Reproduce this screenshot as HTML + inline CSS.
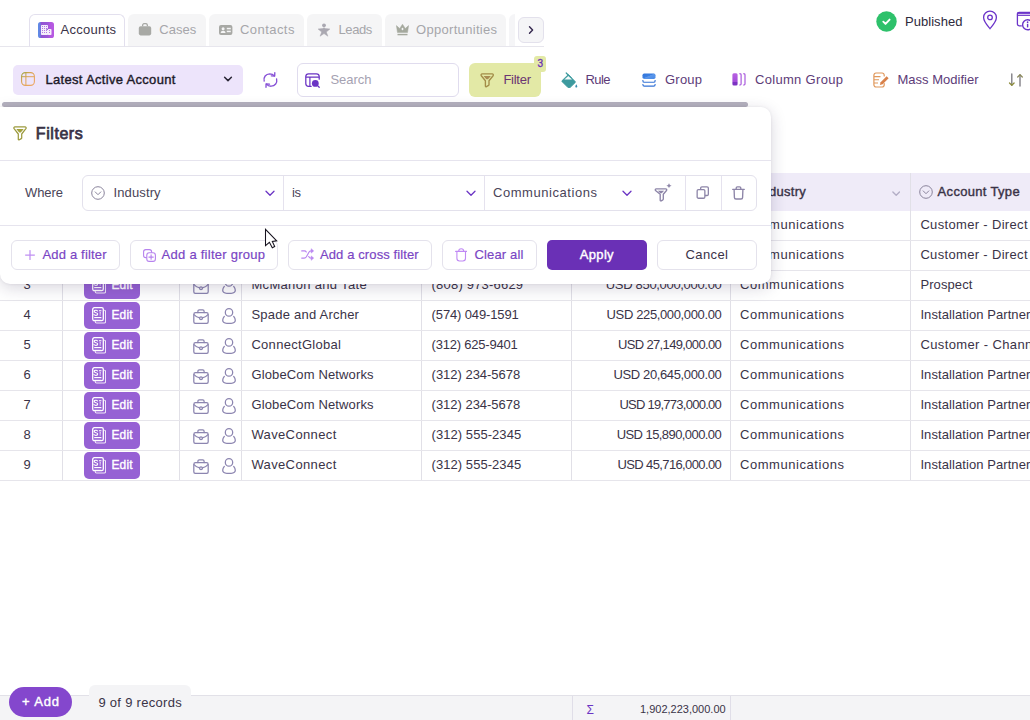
<!DOCTYPE html>
<html lang="en"><head><meta charset="utf-8"><title>Accounts</title>
<style>
html,body{margin:0;padding:0;}
body{width:1030px;height:720px;overflow:hidden;position:relative;background:#fff;font-family:"Liberation Sans",sans-serif;}
.b{position:absolute;box-sizing:border-box;display:block;}
.t{position:absolute;white-space:nowrap;line-height:20px;}
</style></head><body>
<div class="b " style="left:0px;top:46px;width:544px;height:1px;background:#e7e6ed;"></div>
<div class="b " style="left:128px;top:14px;width:78px;height:32px;background:#f5f5f6;border-radius:6px 6px 0 0;"></div>
<div class="b " style="left:209px;top:14px;width:95px;height:32px;background:#f5f5f6;border-radius:6px 6px 0 0;"></div>
<div class="b " style="left:307px;top:14px;width:75px;height:32px;background:#f5f5f6;border-radius:6px 6px 0 0;"></div>
<div class="b " style="left:385px;top:14px;width:121px;height:32px;background:#f5f5f6;border-radius:6px 6px 0 0;"></div>
<div class="b " style="left:509px;top:14px;width:6px;height:32px;background:#f5f5f7;border-radius:6px 0 0 0;"></div>
<div class="b " style="left:29px;top:14px;width:96px;height:33px;background:#fff;border:1px solid #e3e0ee;border-bottom:1px solid #e7e6ed;border-radius:6px 6px 0 0;"></div>
<svg class="b" style="left:38px;top:22px;" width="16" height="16" viewBox="0 0 16 16" fill="none"><defs><linearGradient id="ga" x1="0" y1="0" x2="1" y2="0"><stop offset="0" stop-color="#5a8ee6"/><stop offset=".13" stop-color="#6a80e2"/><stop offset=".2" stop-color="#9152d2"/><stop offset=".6" stop-color="#9a58d8"/><stop offset=".75" stop-color="#b257e0"/><stop offset="1" stop-color="#b85ae2"/></linearGradient></defs>
<rect width="16" height="16" rx="2.600" fill="url(#ga)"/>
<g fill="#fff" opacity=".9"><rect x="3" y="3" width="7" height="10" rx=".8"/><rect x="9.600" y="7" width="3.900" height="6" rx=".8"/></g>
<g fill="#b57ae2"><rect x="4" y="4" width="1" height="1"/><rect x="4" y="6" width="1" height="1"/><rect x="4" y="8" width="1" height="1"/><rect x="4" y="10" width="1" height="1"/><rect x="6" y="4" width="1" height="1"/><rect x="6" y="6" width="1" height="1"/><rect x="6" y="8" width="1" height="1"/><rect x="6" y="10" width="1" height="1"/><rect x="8" y="4" width="1" height="1"/><rect x="8" y="6" width="1" height="1"/><rect x="8" y="8" width="1" height="1"/><rect x="8" y="10" width="1" height="1"/><rect x="11" y="8" width="1" height="1"/><rect x="11" y="10" width="1" height="1"/><rect x="8.500" y="6.600" width="1.400" height="1.400" fill="#9152d2"/></g></svg>
<span class="t" style="left:60.6px;top:19.5px;font-size:13px;letter-spacing:0.28px;color:#3a3347;">Accounts</span>
<svg class="b" style="left:138.3px;top:23px;" width="14" height="13" viewBox="0 0 14 13" fill="none"><path d="M4.6 3.2V2.4C4.6 1.4 5.4.6 6.4.6h1.2c1 0 1.8.8 1.8 1.8v.8" stroke="#a8a9a5" stroke-width="1.3"/><rect x=".8" y="3.2" width="12.4" height="9.2" rx="1.8" fill="#a8a9a5"/></svg>
<span class="t" style="left:159.3px;top:19.5px;font-size:13px;letter-spacing:0.04px;color:#a6a6aa;">Cases</span>
<svg class="b" style="left:219px;top:25px;" width="14" height="10" viewBox="0 0 14 10" fill="none"><rect width="13.4" height="10" rx="2" fill="#a8a9a5"/><circle cx="4.1" cy="3.7" r="1.5" fill="#f5f5f6"/><path d="M1.7 8c0-1.5 1-2.3 2.4-2.3S6.5 6.500 6.500 8z" fill="#f5f5f6"/><rect x="7.800" y="2.800" width="4" height="1.500" fill="#f5f5f6"/><rect x="7.800" y="5.700" width="4" height="1.500" fill="#f5f5f6"/></svg>
<span class="t" style="left:240.0px;top:19.5px;font-size:13px;letter-spacing:0.44px;color:#a6a6aa;">Contacts</span>
<svg class="b" style="left:318px;top:22px;" width="12" height="15" viewBox="0 0 12 15" fill="none"><circle cx="6" cy="3.300" r="1.900" fill="#aaa8b1"/><path d="M.1 7l4.500-.4L6 5.700l1.400.9 4.500.4-3.600 3 1.600 4.200L6 11.600l-3.900 2.600L3.700 10z" fill="#aaa8b1" stroke="#aaa8b1" stroke-width=".5" stroke-linejoin="round"/></svg>
<span class="t" style="left:338.4px;top:19.5px;font-size:13px;letter-spacing:-0.36px;color:#a6a6aa;">Leads</span>
<svg class="b" style="left:395.6px;top:24px;" width="13.5" height="11.5" viewBox="0 0 13.5 11.5" fill="none"><path d="M.4 1.600l3.300 2.900L6.500.2l2.800 4.300 3.300-2.900-1.100 7H1.500z" fill="#a5a99e" stroke="#a5a99e" stroke-width=".5" stroke-linejoin="round"/><ellipse cx="6.500" cy="5" rx=".9" ry="1.300" fill="#f5f5f6"/><rect x="1.500" y="9.900" width="10" height="1.400" fill="#a5a99e"/></svg>
<span class="t" style="left:416.0px;top:19.5px;font-size:13px;letter-spacing:0.31px;color:#a6a6aa;">Opportunities</span>
<div class="b " style="left:518px;top:17px;width:26px;height:26px;background:#f5f5f7;border:1px solid #e3e1ec;border-radius:6px;"></div>
<svg class="b" style="left:526px;top:25px;" width="10" height="10" viewBox="0 0 10 10" fill="none"><path d="M3.500 1.700L6.600 5 3.500 8.300" stroke="#35284f" stroke-width="1.400" stroke-linecap="round" stroke-linejoin="round"/></svg>
<svg class="b" style="left:876px;top:11px;" width="21" height="21" viewBox="0 0 21 21" fill="none"><circle cx="10.500" cy="10.500" r="10.200" fill="#2ec16b"/><path d="M7.300 10.700l2.200 2.200 4.100-4.300" stroke="#fff" stroke-width="1.900" stroke-linecap="round" stroke-linejoin="round"/></svg>
<span class="t" style="left:905.0px;top:11.5px;font-size:13px;letter-spacing:0.04px;color:#2e2a3b;">Published</span>
<svg class="b" style="left:982px;top:9.7px;" width="16" height="20" viewBox="0 0 16 20" fill="none"><path d="M8 1.200c3.600 0 6.400 2.700 6.400 6.200 0 4-4.300 8.600-6.400 11.200C5.900 16 1.600 11.400 1.600 7.400 1.600 3.900 4.400 1.200 8 1.200z" stroke="#6b34c9" stroke-width="1.300"/><circle cx="8" cy="7.400" r="2.300" stroke="#6b34c9" stroke-width="1.300"/></svg>
<svg class="b" style="left:1016px;top:10.5px;" width="16" height="21" viewBox="0 0 16 21" fill="none"><path d="M14 1.300H3.200c-1 0-1.800.8-1.800 1.800V13c0 1 .8 1.800 1.800 1.800h2.600" stroke="#6b34c9" stroke-width="1.300"/><path d="M1.400 4.300H14" stroke="#6b34c9" stroke-width="1.200"/><path d="M1.400 2.200H14" stroke="#6b34c9" stroke-width="1.400"/><circle cx="11.600" cy="13.800" r="5" fill="#fff" stroke="#6b34c9" stroke-width="1.400"/><rect x="10.900" y="12.800" width="1.400" height="3.600" fill="#6b34c9"/><circle cx="11.600" cy="11.200" r=".85" fill="#6b34c9"/></svg>
<div class="b " style="left:13px;top:65px;width:230px;height:30px;background:#ede4fb;border-radius:5px;"></div>
<svg class="b" style="left:21px;top:72px;" width="14" height="14" viewBox="0 0 14 14" fill="none"><defs><linearGradient id="gv" x1="0" y1="0" x2="1" y2="1"><stop offset="0" stop-color="#9aa640"/><stop offset=".35" stop-color="#d9a452"/><stop offset="1" stop-color="#f0a868"/></linearGradient></defs><rect x=".6" y=".6" width="12.800" height="12.800" rx="3.800" stroke="url(#gv)" stroke-width="1.100"/><path d="M.6 4.700h12.800M4.900.8v12.600" stroke="url(#gv)" stroke-width="1"/></svg>
<span class="t" style="left:45.4px;top:69.5px;font-size:13px;letter-spacing:0.32px;color:#1d1a29;-webkit-text-stroke:0.40px #1d1a29;">Latest Active Account</span>
<svg class="b" style="left:223px;top:75px;" width="10" height="8" viewBox="0 0 10 8" fill="none"><path d="M1.600 2.200L5 5.600l3.400-3.400" stroke="#2a2636" stroke-width="1.500" stroke-linecap="round" stroke-linejoin="round"/></svg>
<svg class="b" style="left:262px;top:71px;" width="17" height="18" viewBox="0 0 17 18" fill="none"><g stroke="#8650d6" stroke-width="1.350" stroke-linecap="round" stroke-linejoin="round"><path d="M2.200 10C1.300 6.200 3.800 2.900 7.700 2.800c2 0 3.600.8 4.700 2.100"/><path d="M12.800 1.700l-.1 3.400-3.400-.2"/><path d="M14.600 8c.9 3.800-1.600 7.100-5.500 7.200-2 0-3.600-.8-4.700-2.100"/><path d="M4 16.300l.1-3.400 3.400.2"/></g></svg>
<div class="b " style="left:297px;top:63px;width:162px;height:34px;background:#fff;border:1px solid #e0dcee;border-radius:6px;"></div>
<svg class="b" style="left:305px;top:73px;" width="16" height="15" viewBox="0 0 16 15" fill="none"><path d="M6.200 13.300H3.600C2 13.300.800 12.100.800 10.500V3.600C.800 2 2 .8 3.600.8h7.800C13 .8 14.200 2 14.200 3.600v2.600" stroke="#6b34c4" stroke-width="1.250" stroke-linecap="round"/><path d="M.800 4.200H14.200M4.900 4.200v9" stroke="#6b34c4" stroke-width="1.200"/><circle cx="10.300" cy="10.400" r="3.400" fill="#6b34c4"/><path d="M12.800 12.900l1.400 1.400" stroke="#6b34c4" stroke-width="1.300" stroke-linecap="round"/></svg>
<span class="t" style="left:330.4px;top:69.5px;font-size:13px;letter-spacing:0.00px;color:#a5a2b2;">Search</span>
<div class="b " style="left:469px;top:63px;width:72px;height:34px;background:#e3e9a6;border-radius:6px;"></div>
<div class="b " style="left:534px;top:56px;width:12px;height:16px;background:#e3e9a6;border-radius:3px;"></div>
<span class="t" style="left:537.6px;top:53.5px;font-size:10px;letter-spacing:0.00px;color:#6930b8;-webkit-text-stroke:0.31px #6930b8;">3</span>
<svg class="b" style="left:480px;top:73px;" width="15" height="14.5" viewBox="0 0 15 14.5" fill="none"><path d="M2.200.9h10c1 0 1.500 1 .9 1.800L9 7.700v4c0 .3-.2.600-.4.700l-2.200 1.200c-.5.300-1-.1-1-.6V7.700L1.300 2.700C.7 1.900 1.200.9 2.200.9z" stroke="#a38d48" stroke-width="1.350" stroke-linejoin="round"/><path d="M3.500 2.900h7.400L8 6.300H6.400z" fill="#a98c52"/></svg>
<span class="t" style="left:503.4px;top:69.5px;font-size:13px;letter-spacing:-0.26px;color:#6b3572;">Filter</span>
<svg class="b" style="left:561px;top:71.5px;" width="16.5" height="16.5" viewBox="0 0 16.5 16.5" fill="none"><path d="M5.200 1l5 5" stroke="#3d9a9e" stroke-width="1.200" stroke-linecap="round"/><path d="M7.300 2.600l6.900 6.900c.3.300.3.800 0 1.100l-5.100 5c-.6.600-1.500.6-2.100 0L1.100 9.700c-.3-.3-.3-.8 0-1.100z" fill="#3d9a9e" stroke="#3d9a9e" stroke-width=".8" stroke-linejoin="round"/><path d="M7.300 3.900l3.700 3.700H3.400z" fill="#f4fbfb"/><path d="M15.300 12.300c.6.900 1 1.500 1 2.100s-.4 1-1 1-1-.4-1-1 .4-1.200 1-2.100z" fill="#3b8fb0"/></svg>
<span class="t" style="left:585.6px;top:69.5px;font-size:13px;letter-spacing:-0.65px;color:#5d3b78;">Rule</span>
<svg class="b" style="left:642px;top:72.5px;" width="14" height="14" viewBox="0 0 14 14" fill="none"><defs><linearGradient id="gg" x1="0" y1="0" x2="1" y2="1"><stop offset="0" stop-color="#2f74dc"/><stop offset=".45" stop-color="#3c7fe0"/><stop offset=".5" stop-color="#5b97ea"/><stop offset="1" stop-color="#4a8ae6"/></linearGradient></defs><rect x=".5" y=".5" width="13" height="5.400" rx="1.700" fill="url(#gg)"/><path d="M.9 7v.9c0 .8.600 1.300 1.400 1.300h9.400c.8 0 1.400-.5 1.400-1.300V7" stroke="#3473d6" stroke-width="1.100"/><path d="M.9 10.900v.9c0 .8.600 1.300 1.400 1.300h9.400c.8 0 1.400-.5 1.400-1.300v-.9" stroke="#3473d6" stroke-width="1.100"/></svg>
<span class="t" style="left:665.0px;top:69.5px;font-size:13px;letter-spacing:0.22px;color:#5d3b78;">Group</span>
<svg class="b" style="left:732px;top:73px;" width="14" height="13" viewBox="0 0 14 13" fill="none"><defs><linearGradient id="gc" x1="0" y1="0" x2="0" y2="1"><stop offset="0" stop-color="#b862e2"/><stop offset=".7" stop-color="#a44cda"/><stop offset=".72" stop-color="#7c32c2"/><stop offset="1" stop-color="#7c32c2"/></linearGradient></defs><rect x=".4" y=".3" width="5.200" height="12.200" rx="1.500" fill="url(#gc)"/><path d="M7.300.8h.9c.5 0 .9.400.9.900v9.400c0 .5-.4.900-.9.900h-.9" stroke="#a24cda" stroke-width="1.100"/><path d="M11.200.8h.9c.5 0 .9.400.9.900v9.400c0 .5-.4.900-.9.900h-.9" stroke="#a24cda" stroke-width="1.100"/></svg>
<span class="t" style="left:755.0px;top:69.5px;font-size:13px;letter-spacing:0.31px;color:#5d3b78;">Column Group</span>
<svg class="b" style="left:873px;top:72px;" width="17" height="16" viewBox="0 0 17 16" fill="none"><path d="M11.200 4V3.200c0-1.200-.9-2.200-2.100-2.200H3c-1.200 0-2.100 1-2.100 2.200v9.600C.9 14 1.800 15 3 15h6.100c1.200 0 2.100-1 2.100-2.200V11.500" stroke="#e0975a" stroke-width="1.200" stroke-linecap="round"/><path d="M1 4.600h6.500M1 7.800h5M1 11h4" stroke="#e0975a" stroke-width="1.100"/><path d="M13.600 4.200l2 2-6 6-2.700.7.700-2.700z" fill="#d8814a"/></svg>
<span class="t" style="left:897.4px;top:69.5px;font-size:13px;letter-spacing:0.02px;color:#5d3b78;">Mass Modifier</span>
<svg class="b" style="left:1008px;top:73px;" width="17" height="14" viewBox="0 0 17 14" fill="none"><path d="M3.800 1v11.200" stroke="#77757c" stroke-width="1.300" stroke-linecap="round"/><path d="M1.500 10l2.300 2.300L6.100 10" stroke="#8c8c3c" stroke-width="1.300" stroke-linecap="round" stroke-linejoin="round"/><path d="M12 13V1.800" stroke="#77757c" stroke-width="1.300" stroke-linecap="round"/><path d="M9.700 4l2.300-2.300L14.300 4" stroke="#8c8a5c" stroke-width="1.300" stroke-linecap="round" stroke-linejoin="round"/></svg>
<div class="b " style="left:2px;top:102px;width:746px;height:5px;background:#b4b1be;border-radius:3px;"></div>
<div class="b " style="left:0px;top:173px;width:1030px;height:37.5px;background:#efebf8;"></div>
<div class="b " style="left:62px;top:173px;width:1px;height:307px;background:#e1e0e7;"></div>
<div class="b " style="left:179px;top:173px;width:1px;height:307px;background:#e1e0e7;"></div>
<div class="b " style="left:241px;top:173px;width:1px;height:307px;background:#e1e0e7;"></div>
<div class="b " style="left:421px;top:173px;width:1px;height:307px;background:#e1e0e7;"></div>
<div class="b " style="left:571px;top:173px;width:1px;height:307px;background:#e1e0e7;"></div>
<div class="b " style="left:730px;top:173px;width:1px;height:307px;background:#e1e0e7;"></div>
<div class="b " style="left:910px;top:173px;width:1px;height:307px;background:#e1e0e7;"></div>
<svg class="b" style="left:739px;top:185px;" width="14" height="14" viewBox="0 0 14 14" fill="none"><circle cx="7" cy="7" r="6.300" stroke="#8a849c" stroke-width="1"/><path d="M4.200 5.900L7 8.700l2.800-2.800" stroke="#8a849c" stroke-width="1" stroke-linecap="round" stroke-linejoin="round"/></svg>
<span class="t" style="left:757.6px;top:181.9px;font-size:13px;letter-spacing:0.27px;color:#3a3347;-webkit-text-stroke:0.40px #3a3347;">Industry</span>
<svg class="b" style="left:892px;top:190.6px;" width="8.4" height="6" viewBox="0 0 8.4 6" fill="none"><path d="M.9 1l3.300 3.200L7.500 1" stroke="#b3aec6" stroke-width="1.400" stroke-linecap="round" stroke-linejoin="round"/></svg>
<svg class="b" style="left:919px;top:185px;" width="14" height="14" viewBox="0 0 14 14" fill="none"><circle cx="7" cy="7" r="6.300" stroke="#8a849c" stroke-width="1"/><path d="M4.200 5.900L7 8.700l2.800-2.800" stroke="#8a849c" stroke-width="1" stroke-linecap="round" stroke-linejoin="round"/></svg>
<span class="t" style="left:937.6px;top:181.9px;font-size:13px;letter-spacing:0.32px;color:#3a3347;-webkit-text-stroke:0.40px #3a3347;">Account Type</span>
<div class="b " style="left:0px;top:240px;width:1030px;height:1px;background:#e6e5eb;"></div>
<span class="t" style="left:740.0px;top:214.5px;font-size:13px;letter-spacing:0.55px;color:#3a3347;">Communications</span>
<span class="t" style="left:920.4px;top:214.5px;font-size:13px;letter-spacing:0.33px;color:#3a3347;">Customer - Direct</span>
<div class="b " style="left:0px;top:270px;width:1030px;height:1px;background:#e6e5eb;"></div>
<span class="t" style="left:740.0px;top:244.5px;font-size:13px;letter-spacing:0.55px;color:#3a3347;">Communications</span>
<span class="t" style="left:920.4px;top:244.5px;font-size:13px;letter-spacing:0.33px;color:#3a3347;">Customer - Direct</span>
<div class="b " style="left:0px;top:300px;width:1030px;height:1px;background:#e6e5eb;"></div>
<span class="t" style="left:23.6px;top:274.5px;font-size:13px;letter-spacing:0.00px;color:#3a3347;">3</span>
<div class="b " style="left:84px;top:272px;width:56px;height:27px;background:#9661d4;border-radius:5px;"></div>
<svg class="b" style="left:92px;top:277px;" width="14" height="17" viewBox="0 0 14 17" fill="none"><g stroke="#fff" stroke-linejoin="round"><path d="M3.200 13.600v1c0 .8.600 1.400 1.400 1.400h7.600c.8 0 1.400-.6 1.400-1.400V4.600c0-.8-.6-1.400-1.400-1.400" stroke-width="1.100" opacity=".85"/><rect x=".7" y=".7" width="10.600" height="13" rx="1.600" stroke-width="1.300"/></g><path d="M5.600 4c-.4-.5-1-.8-1.700-.8-1 0-1.700.5-1.700 1.300 0 1.700 3.500.8 3.500 2.600 0 .8-.7 1.300-1.800 1.300-.8 0-1.500-.3-1.900-.9" stroke="#fff" stroke-width="1.150" stroke-linecap="round" fill="none"/><g fill="#fff"><rect x="7" y="3.200" width="2.400" height="1.100"/><rect x="7.500" y="5.400" width="1.500" height="1.100"/><rect x="7.500" y="7.400" width="1.500" height="1.100" opacity=".65"/><rect x="2.200" y="10" width="7.200" height="1"/><rect x="2.200" y="11.700" width="7.200" height=".7" opacity=".6"/></g></svg>
<span class="t" style="left:111.4px;top:274.6px;font-size:12px;letter-spacing:0.21px;color:#fff;-webkit-text-stroke:0.37px #fff;">Edit</span>
<svg class="b" style="left:193px;top:278.7px;" width="16" height="15.2" viewBox="0 0 16 15.200" fill="none"><g stroke="#8c85b0" stroke-width="1.250" stroke-linejoin="round" stroke-linecap="round"><rect x=".8" y="3.700" width="14.400" height="10.700" rx="1.700"/><path d="M4.900 3.600V2.300c0-.8.600-1.400 1.400-1.400h3.400c.8 0 1.400.6 1.400 1.400v1.300"/><path d="M1 5.600c1.500 1.700 3.500 2.800 5.600 3.200M15 5.600c-1.500 1.700-3.500 2.800-5.600 3.200"/><circle cx="8" cy="9.200" r="1.400"/></g></svg>
<svg class="b" style="left:221.7px;top:277.8px;" width="14" height="16.2" viewBox="0 0 14 16.200" fill="none"><g stroke="#8c85b0" stroke-width="1.250" stroke-linecap="round"><circle cx="7" cy="4.400" r="3.700"/><path d="M2.300 8.400C1.300 9.600.7 10.900.7 12.200c0 2 2.800 3.300 6.300 3.300s6.300-1.300 6.300-3.300c0-1.300-.6-2.600-1.600-3.800"/></g></svg>
<span class="t" style="left:251.4px;top:274.5px;font-size:13px;letter-spacing:0.33px;color:#3a3347;">McMahon and Tate</span>
<span class="t" style="left:431.6px;top:274.5px;font-size:13px;letter-spacing:0.20px;color:#3a3347;">(808) 973-6629</span>
<span class="t" style="left:605.8px;top:274.5px;font-size:13px;letter-spacing:-0.32px;color:#3a3347;">USD 850,000,000.00</span>
<span class="t" style="left:740.0px;top:274.5px;font-size:13px;letter-spacing:0.55px;color:#3a3347;">Communications</span>
<span class="t" style="left:920.4px;top:274.5px;font-size:13px;letter-spacing:0.10px;color:#3a3347;">Prospect</span>
<div class="b " style="left:0px;top:330px;width:1030px;height:1px;background:#e6e5eb;"></div>
<span class="t" style="left:23.6px;top:304.5px;font-size:13px;letter-spacing:0.00px;color:#3a3347;">4</span>
<div class="b " style="left:84px;top:302px;width:56px;height:27px;background:#9661d4;border-radius:5px;"></div>
<svg class="b" style="left:92px;top:307px;" width="14" height="17" viewBox="0 0 14 17" fill="none"><g stroke="#fff" stroke-linejoin="round"><path d="M3.200 13.600v1c0 .8.600 1.400 1.400 1.400h7.600c.8 0 1.400-.6 1.400-1.400V4.600c0-.8-.6-1.400-1.400-1.400" stroke-width="1.100" opacity=".85"/><rect x=".7" y=".7" width="10.600" height="13" rx="1.600" stroke-width="1.300"/></g><path d="M5.600 4c-.4-.5-1-.8-1.700-.8-1 0-1.700.5-1.700 1.300 0 1.700 3.500.8 3.500 2.600 0 .8-.7 1.300-1.800 1.300-.8 0-1.500-.3-1.900-.9" stroke="#fff" stroke-width="1.150" stroke-linecap="round" fill="none"/><g fill="#fff"><rect x="7" y="3.200" width="2.400" height="1.100"/><rect x="7.500" y="5.400" width="1.500" height="1.100"/><rect x="7.500" y="7.400" width="1.500" height="1.100" opacity=".65"/><rect x="2.200" y="10" width="7.200" height="1"/><rect x="2.200" y="11.700" width="7.200" height=".7" opacity=".6"/></g></svg>
<span class="t" style="left:111.4px;top:304.6px;font-size:12px;letter-spacing:0.21px;color:#fff;-webkit-text-stroke:0.37px #fff;">Edit</span>
<svg class="b" style="left:193px;top:308.7px;" width="16" height="15.2" viewBox="0 0 16 15.200" fill="none"><g stroke="#8c85b0" stroke-width="1.250" stroke-linejoin="round" stroke-linecap="round"><rect x=".8" y="3.700" width="14.400" height="10.700" rx="1.700"/><path d="M4.900 3.600V2.300c0-.8.600-1.400 1.400-1.400h3.400c.8 0 1.400.6 1.400 1.400v1.300"/><path d="M1 5.600c1.500 1.700 3.500 2.800 5.600 3.200M15 5.600c-1.500 1.700-3.500 2.800-5.600 3.200"/><circle cx="8" cy="9.200" r="1.400"/></g></svg>
<svg class="b" style="left:221.7px;top:307.8px;" width="14" height="16.2" viewBox="0 0 14 16.200" fill="none"><g stroke="#8c85b0" stroke-width="1.250" stroke-linecap="round"><circle cx="7" cy="4.400" r="3.700"/><path d="M2.300 8.400C1.300 9.600.7 10.900.7 12.200c0 2 2.800 3.300 6.300 3.300s6.300-1.300 6.300-3.300c0-1.300-.6-2.600-1.600-3.800"/></g></svg>
<span class="t" style="left:251.4px;top:304.5px;font-size:13px;letter-spacing:0.23px;color:#3a3347;">Spade and Archer</span>
<span class="t" style="left:431.6px;top:304.5px;font-size:13px;letter-spacing:-0.13px;color:#3a3347;">(574) 049-1591</span>
<span class="t" style="left:606.6px;top:304.5px;font-size:13px;letter-spacing:-0.37px;color:#3a3347;">USD 225,000,000.00</span>
<span class="t" style="left:740.0px;top:304.5px;font-size:13px;letter-spacing:0.55px;color:#3a3347;">Communications</span>
<span class="t" style="left:920.4px;top:304.5px;font-size:13px;letter-spacing:0.08px;color:#3a3347;">Installation Partner</span>
<div class="b " style="left:0px;top:360px;width:1030px;height:1px;background:#e6e5eb;"></div>
<span class="t" style="left:23.6px;top:334.5px;font-size:13px;letter-spacing:0.00px;color:#3a3347;">5</span>
<div class="b " style="left:84px;top:332px;width:56px;height:27px;background:#9661d4;border-radius:5px;"></div>
<svg class="b" style="left:92px;top:337px;" width="14" height="17" viewBox="0 0 14 17" fill="none"><g stroke="#fff" stroke-linejoin="round"><path d="M3.200 13.600v1c0 .8.600 1.400 1.400 1.400h7.600c.8 0 1.400-.6 1.400-1.400V4.600c0-.8-.6-1.400-1.400-1.400" stroke-width="1.100" opacity=".85"/><rect x=".7" y=".7" width="10.600" height="13" rx="1.600" stroke-width="1.300"/></g><path d="M5.600 4c-.4-.5-1-.8-1.700-.8-1 0-1.700.5-1.700 1.300 0 1.700 3.500.8 3.500 2.600 0 .8-.7 1.300-1.800 1.300-.8 0-1.500-.3-1.900-.9" stroke="#fff" stroke-width="1.150" stroke-linecap="round" fill="none"/><g fill="#fff"><rect x="7" y="3.200" width="2.400" height="1.100"/><rect x="7.500" y="5.400" width="1.500" height="1.100"/><rect x="7.500" y="7.400" width="1.500" height="1.100" opacity=".65"/><rect x="2.200" y="10" width="7.200" height="1"/><rect x="2.200" y="11.700" width="7.200" height=".7" opacity=".6"/></g></svg>
<span class="t" style="left:111.4px;top:334.6px;font-size:12px;letter-spacing:0.21px;color:#fff;-webkit-text-stroke:0.37px #fff;">Edit</span>
<svg class="b" style="left:193px;top:338.7px;" width="16" height="15.2" viewBox="0 0 16 15.200" fill="none"><g stroke="#8c85b0" stroke-width="1.250" stroke-linejoin="round" stroke-linecap="round"><rect x=".8" y="3.700" width="14.400" height="10.700" rx="1.700"/><path d="M4.900 3.600V2.300c0-.8.600-1.400 1.400-1.400h3.400c.8 0 1.400.6 1.400 1.400v1.300"/><path d="M1 5.600c1.500 1.700 3.500 2.800 5.600 3.200M15 5.600c-1.500 1.700-3.500 2.800-5.600 3.200"/><circle cx="8" cy="9.200" r="1.400"/></g></svg>
<svg class="b" style="left:221.7px;top:337.8px;" width="14" height="16.2" viewBox="0 0 14 16.200" fill="none"><g stroke="#8c85b0" stroke-width="1.250" stroke-linecap="round"><circle cx="7" cy="4.400" r="3.700"/><path d="M2.300 8.400C1.300 9.600.7 10.900.7 12.200c0 2 2.800 3.300 6.300 3.300s6.300-1.300 6.300-3.300c0-1.300-.6-2.600-1.600-3.800"/></g></svg>
<span class="t" style="left:251.4px;top:334.5px;font-size:13px;letter-spacing:0.30px;color:#3a3347;">ConnectGlobal</span>
<span class="t" style="left:431.6px;top:334.5px;font-size:13px;letter-spacing:-0.21px;color:#3a3347;">(312) 625-9401</span>
<span class="t" style="left:618.0px;top:334.5px;font-size:13px;letter-spacing:-0.65px;color:#3a3347;">USD 27,149,000.00</span>
<span class="t" style="left:740.0px;top:334.5px;font-size:13px;letter-spacing:0.55px;color:#3a3347;">Communications</span>
<span class="t" style="left:920.4px;top:334.5px;font-size:13px;letter-spacing:0.38px;color:#3a3347;">Customer - Channel</span>
<div class="b " style="left:0px;top:390px;width:1030px;height:1px;background:#e6e5eb;"></div>
<span class="t" style="left:23.6px;top:364.5px;font-size:13px;letter-spacing:0.00px;color:#3a3347;">6</span>
<div class="b " style="left:84px;top:362px;width:56px;height:27px;background:#9661d4;border-radius:5px;"></div>
<svg class="b" style="left:92px;top:367px;" width="14" height="17" viewBox="0 0 14 17" fill="none"><g stroke="#fff" stroke-linejoin="round"><path d="M3.200 13.600v1c0 .8.600 1.400 1.400 1.400h7.600c.8 0 1.400-.6 1.400-1.400V4.600c0-.8-.6-1.400-1.400-1.400" stroke-width="1.100" opacity=".85"/><rect x=".7" y=".7" width="10.600" height="13" rx="1.600" stroke-width="1.300"/></g><path d="M5.600 4c-.4-.5-1-.8-1.700-.8-1 0-1.700.5-1.700 1.300 0 1.700 3.500.8 3.500 2.600 0 .8-.7 1.300-1.800 1.300-.8 0-1.500-.3-1.900-.9" stroke="#fff" stroke-width="1.150" stroke-linecap="round" fill="none"/><g fill="#fff"><rect x="7" y="3.200" width="2.400" height="1.100"/><rect x="7.500" y="5.400" width="1.500" height="1.100"/><rect x="7.500" y="7.400" width="1.500" height="1.100" opacity=".65"/><rect x="2.200" y="10" width="7.200" height="1"/><rect x="2.200" y="11.700" width="7.200" height=".7" opacity=".6"/></g></svg>
<span class="t" style="left:111.4px;top:364.6px;font-size:12px;letter-spacing:0.21px;color:#fff;-webkit-text-stroke:0.37px #fff;">Edit</span>
<svg class="b" style="left:193px;top:368.7px;" width="16" height="15.2" viewBox="0 0 16 15.200" fill="none"><g stroke="#8c85b0" stroke-width="1.250" stroke-linejoin="round" stroke-linecap="round"><rect x=".8" y="3.700" width="14.400" height="10.700" rx="1.700"/><path d="M4.900 3.600V2.300c0-.8.600-1.400 1.400-1.400h3.400c.8 0 1.400.6 1.400 1.400v1.300"/><path d="M1 5.600c1.500 1.700 3.500 2.800 5.600 3.200M15 5.600c-1.500 1.700-3.500 2.800-5.600 3.200"/><circle cx="8" cy="9.200" r="1.400"/></g></svg>
<svg class="b" style="left:221.7px;top:367.8px;" width="14" height="16.2" viewBox="0 0 14 16.200" fill="none"><g stroke="#8c85b0" stroke-width="1.250" stroke-linecap="round"><circle cx="7" cy="4.400" r="3.700"/><path d="M2.300 8.400C1.300 9.600.7 10.900.7 12.200c0 2 2.800 3.300 6.300 3.300s6.300-1.300 6.300-3.300c0-1.300-.6-2.600-1.600-3.800"/></g></svg>
<span class="t" style="left:251.4px;top:364.5px;font-size:13px;letter-spacing:0.14px;color:#3a3347;">GlobeCom Networks</span>
<span class="t" style="left:431.6px;top:364.5px;font-size:13px;letter-spacing:-0.02px;color:#3a3347;">(312) 234-5678</span>
<span class="t" style="left:613.4px;top:364.5px;font-size:13px;letter-spacing:-0.36px;color:#3a3347;">USD 20,645,000.00</span>
<span class="t" style="left:740.0px;top:364.5px;font-size:13px;letter-spacing:0.55px;color:#3a3347;">Communications</span>
<span class="t" style="left:920.4px;top:364.5px;font-size:13px;letter-spacing:0.08px;color:#3a3347;">Installation Partner</span>
<div class="b " style="left:0px;top:420px;width:1030px;height:1px;background:#e6e5eb;"></div>
<span class="t" style="left:23.6px;top:394.5px;font-size:13px;letter-spacing:0.00px;color:#3a3347;">7</span>
<div class="b " style="left:84px;top:392px;width:56px;height:27px;background:#9661d4;border-radius:5px;"></div>
<svg class="b" style="left:92px;top:397px;" width="14" height="17" viewBox="0 0 14 17" fill="none"><g stroke="#fff" stroke-linejoin="round"><path d="M3.200 13.600v1c0 .8.600 1.400 1.400 1.400h7.600c.8 0 1.400-.6 1.400-1.400V4.600c0-.8-.6-1.400-1.400-1.400" stroke-width="1.100" opacity=".85"/><rect x=".7" y=".7" width="10.600" height="13" rx="1.600" stroke-width="1.300"/></g><path d="M5.600 4c-.4-.5-1-.8-1.700-.8-1 0-1.700.5-1.700 1.300 0 1.700 3.500.8 3.500 2.600 0 .8-.7 1.300-1.800 1.300-.8 0-1.500-.3-1.900-.9" stroke="#fff" stroke-width="1.150" stroke-linecap="round" fill="none"/><g fill="#fff"><rect x="7" y="3.200" width="2.400" height="1.100"/><rect x="7.500" y="5.400" width="1.500" height="1.100"/><rect x="7.500" y="7.400" width="1.500" height="1.100" opacity=".65"/><rect x="2.200" y="10" width="7.200" height="1"/><rect x="2.200" y="11.700" width="7.200" height=".7" opacity=".6"/></g></svg>
<span class="t" style="left:111.4px;top:394.6px;font-size:12px;letter-spacing:0.21px;color:#fff;-webkit-text-stroke:0.37px #fff;">Edit</span>
<svg class="b" style="left:193px;top:398.7px;" width="16" height="15.2" viewBox="0 0 16 15.200" fill="none"><g stroke="#8c85b0" stroke-width="1.250" stroke-linejoin="round" stroke-linecap="round"><rect x=".8" y="3.700" width="14.400" height="10.700" rx="1.700"/><path d="M4.900 3.600V2.300c0-.8.600-1.400 1.400-1.400h3.400c.8 0 1.400.6 1.400 1.400v1.300"/><path d="M1 5.600c1.500 1.700 3.500 2.800 5.600 3.200M15 5.600c-1.500 1.700-3.500 2.800-5.600 3.200"/><circle cx="8" cy="9.200" r="1.400"/></g></svg>
<svg class="b" style="left:221.7px;top:397.8px;" width="14" height="16.2" viewBox="0 0 14 16.200" fill="none"><g stroke="#8c85b0" stroke-width="1.250" stroke-linecap="round"><circle cx="7" cy="4.400" r="3.700"/><path d="M2.300 8.400C1.300 9.600.7 10.900.7 12.200c0 2 2.800 3.300 6.300 3.300s6.300-1.300 6.300-3.300c0-1.300-.6-2.600-1.600-3.800"/></g></svg>
<span class="t" style="left:251.4px;top:394.5px;font-size:13px;letter-spacing:0.14px;color:#3a3347;">GlobeCom Networks</span>
<span class="t" style="left:431.6px;top:394.5px;font-size:13px;letter-spacing:-0.02px;color:#3a3347;">(312) 234-5678</span>
<span class="t" style="left:619.4px;top:394.5px;font-size:13px;letter-spacing:-0.74px;color:#3a3347;">USD 19,773,000.00</span>
<span class="t" style="left:740.0px;top:394.5px;font-size:13px;letter-spacing:0.55px;color:#3a3347;">Communications</span>
<span class="t" style="left:920.4px;top:394.5px;font-size:13px;letter-spacing:0.08px;color:#3a3347;">Installation Partner</span>
<div class="b " style="left:0px;top:450px;width:1030px;height:1px;background:#e6e5eb;"></div>
<span class="t" style="left:23.6px;top:424.5px;font-size:13px;letter-spacing:0.00px;color:#3a3347;">8</span>
<div class="b " style="left:84px;top:422px;width:56px;height:27px;background:#9661d4;border-radius:5px;"></div>
<svg class="b" style="left:92px;top:427px;" width="14" height="17" viewBox="0 0 14 17" fill="none"><g stroke="#fff" stroke-linejoin="round"><path d="M3.200 13.600v1c0 .8.600 1.400 1.400 1.400h7.600c.8 0 1.400-.6 1.400-1.400V4.600c0-.8-.6-1.400-1.400-1.400" stroke-width="1.100" opacity=".85"/><rect x=".7" y=".7" width="10.600" height="13" rx="1.600" stroke-width="1.300"/></g><path d="M5.600 4c-.4-.5-1-.8-1.700-.8-1 0-1.700.5-1.700 1.300 0 1.700 3.500.8 3.500 2.600 0 .8-.7 1.300-1.800 1.300-.8 0-1.500-.3-1.900-.9" stroke="#fff" stroke-width="1.150" stroke-linecap="round" fill="none"/><g fill="#fff"><rect x="7" y="3.200" width="2.400" height="1.100"/><rect x="7.500" y="5.400" width="1.500" height="1.100"/><rect x="7.500" y="7.400" width="1.500" height="1.100" opacity=".65"/><rect x="2.200" y="10" width="7.200" height="1"/><rect x="2.200" y="11.700" width="7.200" height=".7" opacity=".6"/></g></svg>
<span class="t" style="left:111.4px;top:424.6px;font-size:12px;letter-spacing:0.21px;color:#fff;-webkit-text-stroke:0.37px #fff;">Edit</span>
<svg class="b" style="left:193px;top:428.7px;" width="16" height="15.2" viewBox="0 0 16 15.200" fill="none"><g stroke="#8c85b0" stroke-width="1.250" stroke-linejoin="round" stroke-linecap="round"><rect x=".8" y="3.700" width="14.400" height="10.700" rx="1.700"/><path d="M4.900 3.600V2.300c0-.8.600-1.400 1.400-1.400h3.400c.8 0 1.400.6 1.400 1.400v1.300"/><path d="M1 5.600c1.500 1.700 3.500 2.800 5.600 3.200M15 5.600c-1.500 1.700-3.500 2.800-5.600 3.200"/><circle cx="8" cy="9.200" r="1.400"/></g></svg>
<svg class="b" style="left:221.7px;top:427.8px;" width="14" height="16.2" viewBox="0 0 14 16.200" fill="none"><g stroke="#8c85b0" stroke-width="1.250" stroke-linecap="round"><circle cx="7" cy="4.400" r="3.700"/><path d="M2.300 8.400C1.300 9.600.7 10.900.7 12.200c0 2 2.800 3.300 6.300 3.300s6.300-1.300 6.300-3.300c0-1.300-.6-2.600-1.600-3.800"/></g></svg>
<span class="t" style="left:251.4px;top:424.5px;font-size:13px;letter-spacing:0.37px;color:#3a3347;">WaveConnect</span>
<span class="t" style="left:431.6px;top:424.5px;font-size:13px;letter-spacing:0.05px;color:#3a3347;">(312) 555-2345</span>
<span class="t" style="left:616.7px;top:424.5px;font-size:13px;letter-spacing:-0.57px;color:#3a3347;">USD 15,890,000.00</span>
<span class="t" style="left:740.0px;top:424.5px;font-size:13px;letter-spacing:0.55px;color:#3a3347;">Communications</span>
<span class="t" style="left:920.4px;top:424.5px;font-size:13px;letter-spacing:0.08px;color:#3a3347;">Installation Partner</span>
<div class="b " style="left:0px;top:480px;width:1030px;height:1px;background:#e6e5eb;"></div>
<span class="t" style="left:23.6px;top:454.5px;font-size:13px;letter-spacing:0.00px;color:#3a3347;">9</span>
<div class="b " style="left:84px;top:452px;width:56px;height:27px;background:#9661d4;border-radius:5px;"></div>
<svg class="b" style="left:92px;top:457px;" width="14" height="17" viewBox="0 0 14 17" fill="none"><g stroke="#fff" stroke-linejoin="round"><path d="M3.200 13.600v1c0 .8.600 1.400 1.400 1.400h7.600c.8 0 1.400-.6 1.400-1.400V4.600c0-.8-.6-1.400-1.400-1.400" stroke-width="1.100" opacity=".85"/><rect x=".7" y=".7" width="10.600" height="13" rx="1.600" stroke-width="1.300"/></g><path d="M5.600 4c-.4-.5-1-.8-1.700-.8-1 0-1.700.5-1.700 1.300 0 1.700 3.500.8 3.500 2.600 0 .8-.7 1.300-1.800 1.300-.8 0-1.500-.3-1.900-.9" stroke="#fff" stroke-width="1.150" stroke-linecap="round" fill="none"/><g fill="#fff"><rect x="7" y="3.200" width="2.400" height="1.100"/><rect x="7.500" y="5.400" width="1.500" height="1.100"/><rect x="7.500" y="7.400" width="1.500" height="1.100" opacity=".65"/><rect x="2.200" y="10" width="7.200" height="1"/><rect x="2.200" y="11.700" width="7.200" height=".7" opacity=".6"/></g></svg>
<span class="t" style="left:111.4px;top:454.6px;font-size:12px;letter-spacing:0.21px;color:#fff;-webkit-text-stroke:0.37px #fff;">Edit</span>
<svg class="b" style="left:193px;top:458.7px;" width="16" height="15.2" viewBox="0 0 16 15.200" fill="none"><g stroke="#8c85b0" stroke-width="1.250" stroke-linejoin="round" stroke-linecap="round"><rect x=".8" y="3.700" width="14.400" height="10.700" rx="1.700"/><path d="M4.900 3.600V2.300c0-.8.600-1.400 1.400-1.400h3.400c.8 0 1.400.6 1.400 1.400v1.300"/><path d="M1 5.600c1.500 1.700 3.500 2.800 5.600 3.200M15 5.600c-1.500 1.700-3.500 2.800-5.600 3.200"/><circle cx="8" cy="9.200" r="1.400"/></g></svg>
<svg class="b" style="left:221.7px;top:457.8px;" width="14" height="16.2" viewBox="0 0 14 16.200" fill="none"><g stroke="#8c85b0" stroke-width="1.250" stroke-linecap="round"><circle cx="7" cy="4.400" r="3.700"/><path d="M2.300 8.400C1.300 9.600.7 10.900.7 12.200c0 2 2.800 3.300 6.300 3.300s6.300-1.300 6.300-3.300c0-1.300-.6-2.600-1.600-3.800"/></g></svg>
<span class="t" style="left:251.4px;top:454.5px;font-size:13px;letter-spacing:0.37px;color:#3a3347;">WaveConnect</span>
<span class="t" style="left:431.6px;top:454.5px;font-size:13px;letter-spacing:0.05px;color:#3a3347;">(312) 555-2345</span>
<span class="t" style="left:617.5px;top:454.5px;font-size:13px;letter-spacing:-0.62px;color:#3a3347;">USD 45,716,000.00</span>
<span class="t" style="left:740.0px;top:454.5px;font-size:13px;letter-spacing:0.55px;color:#3a3347;">Communications</span>
<span class="t" style="left:920.4px;top:454.5px;font-size:13px;letter-spacing:0.08px;color:#3a3347;">Installation Partner</span>
<div class="b " style="left:0px;top:695px;width:1030px;height:25px;background:#f4f4f6;border-top:1px solid #e2e1e8;"></div>
<div class="b " style="left:89px;top:685px;width:102px;height:35px;background:#f4f4f6;border-radius:6px 6px 0 0;"></div>
<div class="b " style="left:572px;top:696px;width:1px;height:24px;background:#e0dee8;"></div>
<div class="b " style="left:730px;top:696px;width:1px;height:24px;background:#e0dee8;"></div>
<div class="b " style="left:9px;top:687px;width:63px;height:30px;background:#8447cd;border-radius:15px;"></div>
<span class="t" style="left:22.0px;top:691.9px;font-size:13px;letter-spacing:0.85px;color:#fff;-webkit-text-stroke:0.40px #fff;">+ Add</span>
<span class="t" style="left:98.4px;top:692.5px;font-size:13px;letter-spacing:0.29px;color:#3a3347;">9 of 9 records</span>
<span class="t" style="left:586.4px;top:699.8px;font-size:12px;letter-spacing:0.00px;color:#6b34c4;">Σ</span>
<span class="t" style="left:640.0px;top:699.2px;font-size:11px;letter-spacing:-0.00px;color:#3a3347;">1,902,223,000.00</span>
<div class="b" style="left:0;top:107px;width:771px;height:176.500px;background:#fff;border-radius:0 10px 10px 10px;box-shadow:0 4px 16px rgba(40,30,70,.18),0 0 3px rgba(40,30,70,.08);"></div>
<svg class="b" style="left:13px;top:126px;" width="14" height="15" viewBox="0 0 14 15" fill="none"><path d="M2 .9h10c1 0 1.500 1 .9 1.800L8.700 8v3.900c0 .3-.2.600-.4.700l-2 1.200c-.5.300-1-.1-1-.6V8L1.100 2.700C.5 1.900 1 .9 2 .9z" stroke="#9c9a3e" stroke-width="1.250" stroke-linejoin="round"/><path d="M3.300 3h7.400L7.800 6.600H6.200z" fill="#a3a23c"/></svg>
<span class="t" style="left:35.8px;top:123.5px;font-size:16px;letter-spacing:0.57px;color:#3a3347;-webkit-text-stroke:0.75px #3a3347;">Filters</span>
<div class="b " style="left:0px;top:160px;width:771px;height:1px;background:#e6e4ee;"></div>
<div class="b " style="left:0px;top:225px;width:771px;height:1px;background:#e6e4ee;"></div>
<span class="t" style="left:25.0px;top:183.0px;font-size:13px;letter-spacing:-0.07px;color:#4a4458;">Where</span>
<div class="b " style="left:82px;top:175px;width:675px;height:36px;border:1px solid #e3e1ec;border-radius:6px;background:#fff;"></div>
<div class="b " style="left:283.2px;top:176px;width:1.3px;height:34px;background:#e5e2ee;"></div>
<div class="b " style="left:484px;top:176px;width:1.3px;height:34px;background:#e5e2ee;"></div>
<div class="b " style="left:684.5px;top:176px;width:1.3px;height:34px;background:#e5e2ee;"></div>
<div class="b " style="left:721.2px;top:176px;width:1.3px;height:34px;background:#e5e2ee;"></div>
<svg class="b" style="left:91px;top:186px;" width="14" height="14" viewBox="0 0 14 14" fill="none"><circle cx="7" cy="7" r="6.300" stroke="#8a849c" stroke-width="1"/><path d="M4.200 5.900L7 8.700l2.800-2.800" stroke="#8a849c" stroke-width="1" stroke-linecap="round" stroke-linejoin="round"/></svg>
<span class="t" style="left:113.4px;top:183.0px;font-size:13px;letter-spacing:0.14px;color:#4a4458;">Industry</span>
<svg class="b" style="left:264.5px;top:189.5px;" width="10" height="7" viewBox="0 0 10 7" fill="none"><path d="M1 1.200l4 4 4-4" stroke="#6b34c4" stroke-width="1.300" stroke-linecap="round" stroke-linejoin="round"/></svg>
<svg class="b" style="left:465.5px;top:189.5px;" width="10" height="7" viewBox="0 0 10 7" fill="none"><path d="M1 1.200l4 4 4-4" stroke="#6b34c4" stroke-width="1.300" stroke-linecap="round" stroke-linejoin="round"/></svg>
<svg class="b" style="left:621.5px;top:189.5px;" width="10" height="7" viewBox="0 0 10 7" fill="none"><path d="M1 1.200l4 4 4-4" stroke="#6b34c4" stroke-width="1.300" stroke-linecap="round" stroke-linejoin="round"/></svg>
<span class="t" style="left:292.0px;top:183.0px;font-size:13px;letter-spacing:-0.39px;color:#4a4458;">is</span>
<span class="t" style="left:493.0px;top:183.0px;font-size:13px;letter-spacing:0.55px;color:#4a4458;">Communications</span>
<svg class="b" style="left:654px;top:183px;" width="18" height="19" viewBox="0 0 18 19" fill="none"><path d="M2.300 5.800h9.400c.9 0 1.300 1 .8 1.700L9.300 11.200v4.800c0 .4-.2.700-.5.900l-1.500.9c-.5.300-1.100-.1-1.100-.6v-6L1.500 7.500c-.5-.7-.1-1.700.8-1.700z" stroke="#8d85a8" stroke-width="1.350" stroke-linejoin="round"/><path d="M3.900 7.700h6.200L7.800 10.300H6.200z" fill="#8d85a8"/><path d="M15 .3l.9 1.600 1.700.8-1.700.8-.9 1.600-.9-1.600-1.700-.8 1.700-.8z" fill="#8d85a8"/></svg>
<svg class="b" style="left:696px;top:186.2px;" width="13" height="13" viewBox="0 0 13 13" fill="none"><rect x="1.150" y="3.550" width="7.700" height="8.700" rx="1.300" stroke="#8d85a8" stroke-width="1.300"/><path d="M4.650 3.400V2.100c0-.7.600-1.300 1.300-1.300h5.100c.7 0 1.300.6 1.300 1.300v6.100c0 .7-.6 1.300-1.300 1.300H9" stroke="#8d85a8" stroke-width="1.300"/></svg>
<svg class="b" style="left:732.2px;top:186.3px;" width="13" height="14" viewBox="0 0 13 14" fill="none"><path d="M.7 3.300h11.600" stroke="#8d85a8" stroke-width="1.350" stroke-linecap="round"/><path d="M4.200 3.200V2c0-.7.500-1.200 1.200-1.200h2.200c.7 0 1.200.5 1.200 1.200v1.200" stroke="#8d85a8" stroke-width="1.350"/><path d="M2.100 3.500l.3 8c0 .9.700 1.500 1.600 1.500h5c.9 0 1.600-.6 1.600-1.500l.3-8" stroke="#8d85a8" stroke-width="1.350" stroke-linejoin="round"/></svg>
<div class="b " style="left:11px;top:240px;width:109px;height:30px;border:1px solid #e4e2ec;border-radius:6px;background:#fff;"></div>
<svg class="b" style="left:24.8px;top:250px;" width="10" height="10" viewBox="0 0 10 10" fill="none"><path d="M5 .6v8.800M.6 5h8.800" stroke="#c090f2" stroke-width="1.250" stroke-linecap="round"/></svg>
<span class="t" style="left:42.4px;top:245.0px;font-size:13px;letter-spacing:0.19px;color:#7a45c4;-webkit-text-stroke:0.18px #7a45c4;">Add a filter</span>
<div class="b " style="left:130px;top:240px;width:148px;height:30px;border:1px solid #e4e2ec;border-radius:6px;background:#fff;"></div>
<svg class="b" style="left:143px;top:249px;" width="13" height="13" viewBox="0 0 13 13" fill="none"><rect x=".6" y=".6" width="8" height="8" rx="2.200" stroke="#b682ee" stroke-width="1.100"/><rect x="3.800" y="3.800" width="8.600" height="8.600" rx="2.400" fill="#fff" stroke="#b682ee" stroke-width="1.100"/><path d="M8.100 5.900v4.400M5.900 8.100h4.400" stroke="#b682ee" stroke-width="1.100" stroke-linecap="round"/></svg>
<span class="t" style="left:161.6px;top:245.0px;font-size:13px;letter-spacing:0.26px;color:#7a45c4;-webkit-text-stroke:0.18px #7a45c4;">Add a filter group</span>
<div class="b " style="left:288px;top:240px;width:144px;height:30px;border:1px solid #e4e2ec;border-radius:6px;background:#fff;"></div>
<svg class="b" style="left:301px;top:248.2px;" width="13" height="13" viewBox="0 0 13 13" fill="none"><g stroke="#b985f0" stroke-width="1.150" stroke-linecap="round" stroke-linejoin="round"><path d="M.7 2.900h2.700c.9 0 1.500.4 1.900 1.100"/><path d="M.7 10.100h2.500c1 0 1.700-.5 2.200-1.300l2.500-4.500c.5-.9 1.200-1.400 2.200-1.400h.6"/><path d="M7.700 8.500c.5 1 1.200 1.600 2.300 1.600h.6"/></g><path d="M10.200.7l2.500 2.200-2.500 2.200zM10.200 7.900l2.500 2.200-2.500 2.200z" fill="#b985f0" stroke="#b985f0" stroke-width=".5" stroke-linejoin="round"/></svg>
<span class="t" style="left:320.0px;top:245.0px;font-size:13px;letter-spacing:0.11px;color:#7a45c4;-webkit-text-stroke:0.18px #7a45c4;">Add a cross filter</span>
<div class="b " style="left:442px;top:240px;width:95px;height:30px;border:1px solid #e4e2ec;border-radius:6px;background:#fff;"></div>
<svg class="b" style="left:454.7px;top:247.7px;" width="12.4" height="14" viewBox="0 0 12.4 14" fill="none"><g stroke="#c08af4" stroke-width="1.100" stroke-linecap="round"><path d="M.6 3.400h11.200"/><path d="M3.700 3.300c0-1.500 1-2.600 2.500-2.600s2.500 1.100 2.500 2.600"/><path d="M1.900 3.600v6.700c0 1.600 1 2.700 2.600 2.700h3.400c1.600 0 2.600-1.100 2.600-2.700V3.600"/></g></svg>
<span class="t" style="left:474.4px;top:245.0px;font-size:13px;letter-spacing:0.16px;color:#7a45c4;-webkit-text-stroke:0.18px #7a45c4;">Clear all</span>
<div class="b " style="left:547px;top:240px;width:100px;height:30px;background:#6a30b6;border-radius:5px;"></div>
<span class="t" style="left:579.8px;top:245.0px;font-size:13px;letter-spacing:0.32px;color:#fff;-webkit-text-stroke:0.40px #fff;">Apply</span>
<div class="b " style="left:657px;top:240px;width:100px;height:30px;border:1px solid #e4e2ec;border-radius:6px;background:#fff;"></div>
<span class="t" style="left:685.6px;top:245.0px;font-size:13px;letter-spacing:0.39px;color:#3a3347;">Cancel</span>
<svg class="b" style="left:262px;top:225.5px;" width="18" height="25" viewBox="0 0 18 25" fill="none"><path d="M3.500 3.300V19.600L7.400 16.300 10.300 21.700 12.700 20.500 10.300 15.400 14.700 14.800z" fill="#fff" stroke="#16121e" stroke-width="1.050" stroke-linejoin="miter"/></svg>
</body></html>
